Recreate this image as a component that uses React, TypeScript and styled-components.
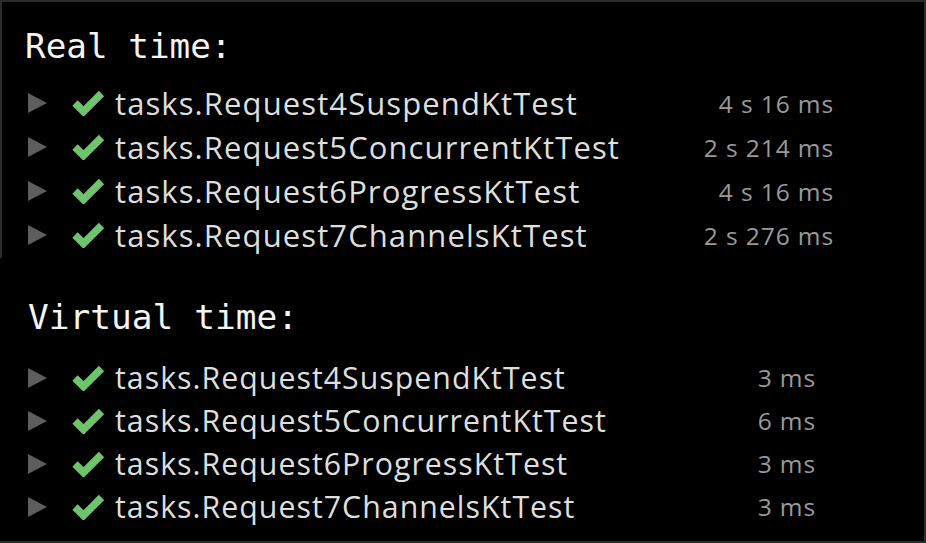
import React from 'react';
import styled, { createGlobalStyle } from 'styled-components';

const GlobalStyle = createGlobalStyle`
  html, body {
    margin: 0;
    padding: 0;
    background: #000;
  }
  body {
    width: 926px;
    height: 543px;
    overflow: hidden;
  }
`;

const Page = styled.div`
  width: 926px;
  height: 543px;
  box-sizing: border-box;
  background: #000;
  border-top: 2px solid #2b2b2b;
  border-right: 2px solid #2b2b2b;
  border-bottom: 2px solid #2b2b2b;
  display: flex;
  flex-direction: column;
`;

const Section = styled.section<{ $top: number; $height: number; $edge?: boolean }>`
  height: ${(p) => p.$height}px;
  box-sizing: border-box;
  padding-top: ${(p) => p.$top}px;
  border-left: 2px solid ${(p) => (p.$edge ? '#2b2b2b' : '#000')};
  display: flex;
  flex-direction: column;
`;

const Heading = styled.h2<{ $indent: number; $gap: number; $size: number }>`
  margin: 0 0 ${(p) => p.$gap}px ${(p) => p.$indent}px;
  font-family: 'DejaVu Sans Mono', monospace;
  font-weight: 400;
  font-size: ${(p) => p.$size}px;
  line-height: 44px;
  height: 44px;
  color: #f4f4f4;
`;

const Row = styled.div<{ $h: number; $durEnd: number }>`
  height: ${(p) => p.$h}px;
  display: grid;
  grid-template-columns: 20px 24px 43px 1fr;
  grid-template-areas: 'arrow . check name';
  align-items: center;
  padding-left: 26px;
  width: ${(p) => p.$durEnd}px;
  box-sizing: border-box;
`;

const Arrow = styled.span`
  grid-area: arrow;
  width: 0;
  height: 0;
  border-top: 10px solid transparent;
  border-bottom: 10px solid transparent;
  border-left: 19px solid #5d5d5d;
`;

const Check = styled.svg`
  grid-area: check;
  width: 33px;
  height: 26px;
  display: block;
`;

const Name = styled.span<{ $size: number; $spacing: number }>`
  grid-area: name;
  display: flex;
  justify-content: space-between;
  align-items: center;
  font-family: 'Open Sans', Roboto, sans-serif;
  font-size: ${(p) => p.$size}px;
  letter-spacing: ${(p) => p.$spacing}px;
  color: #dedede;
  white-space: nowrap;
`;

const Duration = styled.span`
  font-size: 24.5px;
  color: #9a9a9a;
  letter-spacing: 0.9px;
  margin-right: -1px;
`;

type Test = { name: string; time: string };

const realTests: Test[] = [
  { name: 'tasks.Request4SuspendKtTest', time: '4 s 16 ms' },
  { name: 'tasks.Request5ConcurrentKtTest', time: '2 s 214 ms' },
  { name: 'tasks.Request6ProgressKtTest', time: '4 s 16 ms' },
  { name: 'tasks.Request7ChannelsKtTest', time: '2 s 276 ms' },
];

const virtualTests: Test[] = [
  { name: 'tasks.Request4SuspendKtTest', time: '3 ms' },
  { name: 'tasks.Request5ConcurrentKtTest', time: '6 ms' },
  { name: 'tasks.Request6ProgressKtTest', time: '3 ms' },
  { name: 'tasks.Request7ChannelsKtTest', time: '3 ms' },
];

const CheckIcon = () => (
  <Check viewBox="0 0 33 26">
    <path d="M3 13 L11.5 21.5 L29.5 3.5" fill="none" stroke="#6dc46b" strokeWidth="7.5" strokeLinejoin="miter" />
  </Check>
);

const TestList: React.FC<{ tests: Test[]; rowH: number; durEnd: number; size: number; spacing: number }> = ({
  tests,
  rowH,
  durEnd,
  size,
  spacing,
}) => (
  <>
    {tests.map((t) => (
      <Row key={t.name} $h={rowH} $durEnd={durEnd}>
        <Arrow />
        <CheckIcon />
        <Name $size={size} $spacing={spacing}>
          {t.name}
          <Duration>{t.time}</Duration>
        </Name>
      </Row>
    ))}
  </>
);

export default function App() {
  return (
    <Page>
      <GlobalStyle />
      <Section $top={22} $height={256} $edge>
        <Heading $indent={23} $gap={13} $size={34.3}>Real time:</Heading>
        <TestList tests={realTests} rowH={44} durEnd={831} size={31} spacing={1.1} />
      </Section>
      <Section $top={37} $height={283}>
        <Heading $indent={26} $gap={17} $size={34.5}>Virtual time:</Heading>
        <TestList tests={virtualTests} rowH={43} durEnd={813} size={30.3} spacing={1.02} />
      </Section>
    </Page>
  );
}
